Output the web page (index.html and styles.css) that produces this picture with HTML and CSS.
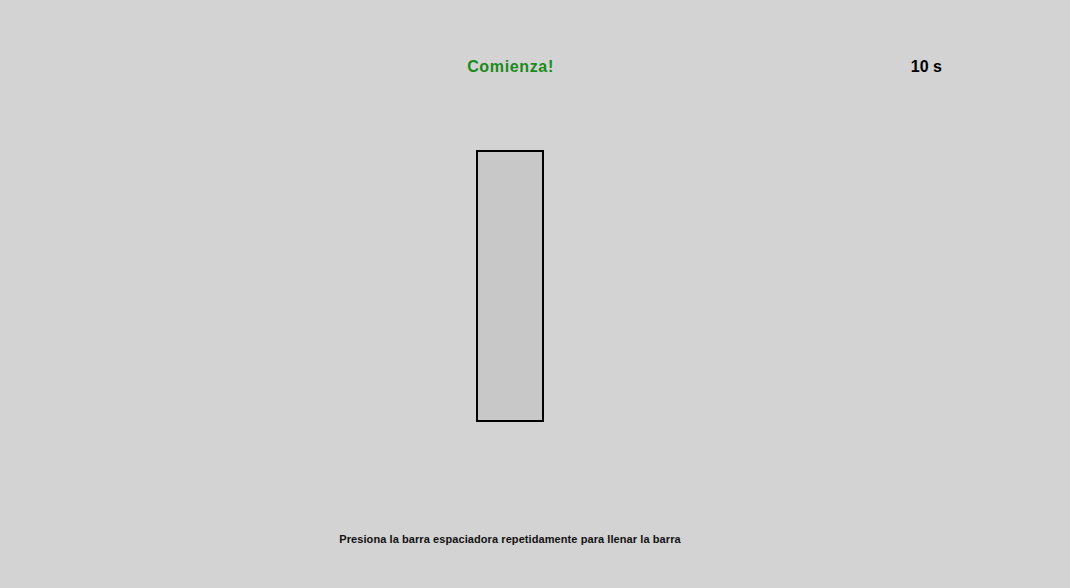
FILE: index.html
```html
<!DOCTYPE html>
<html>
<head>
<meta charset="utf-8">
<link rel="stylesheet" href="styles.css">
</head>
<body>
<div class="page">
  <header class="top">
    <span class="spacer"></span>
    <h1 class="status">Comienza!</h1>
    <span class="timer">10 s</span>
  </header>
  <main class="stage">
    <div class="bar"><div class="fill" style="height:0%"></div></div>
  </main>
  <p class="hint">Presiona la barra espaciadora repetidamente para llenar la barra</p>
</div>
</body>
</html>
```
FILE: styles.css
```css
html, body {
  margin: 0;
  padding: 0;
  background: #d3d3d3;
  font-family: "Liberation Sans", Arial, sans-serif;
}
.page {
  width: 1020px;
  height: 588px;
  display: flex;
  flex-direction: column;
  align-items: center;
}
.top {
  width: 100%;
  display: grid;
  grid-template-columns: 1fr auto 1fr;
  align-items: center;
  padding-top: 57px;
}
.status {
  margin: 0;
  font-size: 16px;
  font-weight: bold;
  color: #1a8a1a;
  line-height: 20px;
  letter-spacing: 0.65px;
  text-indent: 1px;
}
.timer {
  justify-self: end;
  margin-right: 78px;
  font-size: 16px;
  font-weight: bold;
  color: #000;
  line-height: 20px;
}
.stage {
  margin-top: 73px;
}
.bar {
  width: 64px;
  height: 268px;
  border: 2px solid #000;
  background: #c8c8c8;
  display: flex;
  align-items: flex-end;
}
.fill {
  width: 100%;
  background: #1a8a1a;
}
.hint {
  margin: 110px 0 0;
  font-size: 11px;
  font-weight: bold;
  color: #111;
  line-height: 14px;
  letter-spacing: 0.08px;
}
```
